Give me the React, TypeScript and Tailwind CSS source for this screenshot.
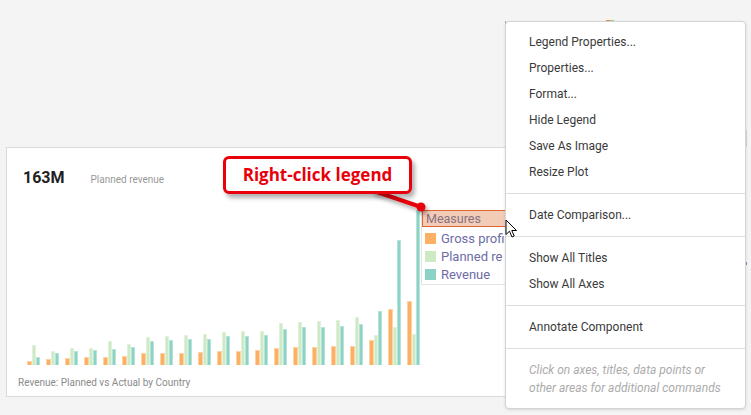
import React from "react";

type Group = [number, number, number];

// bar heights in px: gross profit, planned revenue, revenue
const groups: Group[] = [
  [4, 20, 8],
  [6, 14, 12],
  [7, 17, 14],
  [8, 17, 15],
  [8, 24, 16],
  [9, 21, 18],
  [12, 28, 24],
  [12, 29, 25],
  [12, 30, 26],
  [13, 31, 26],
  [14, 33, 29],
  [14, 34, 29],
  [15, 34, 30],
  [17, 42, 36],
  [18, 43, 38],
  [18, 44, 38],
  [19, 45, 39],
  [19, 48, 41],
  [25, 30, 54],
  [56, 38, 125],
  [64, 31, 155],
];

const menuSections = [
  ["Legend Properties...", "Properties...", "Format...", "Hide Legend", "Save As Image", "Resize Plot"],
  ["Date Comparison..."],
  ["Show All Titles", "Show All Axes"],
  ["Annotate Component"],
];

function Bars() {
  return (
    <div className="flex items-end gap-[6px] h-[155px]">
      {groups.map(([o, g, t], i) => (
        <div key={i} className="flex items-end w-[13px]">
          <div
            className="w-[4.5px] bg-[#fdb064] border border-b-0 border-[#fdd3a8]"
            style={{ height: o }}
          />
          <div
            className="w-[4.5px] bg-[#cdeac5] border border-b-0 border-[#e1f2dc]"
            style={{ height: g }}
          />
          <div
            className="w-[4px] bg-[#8dd3c5] border border-b-0 border-[#b6e3da]"
            style={{ height: t }}
          />
        </div>
      ))}
    </div>
  );
}

function Legend() {
  // the legend runs on under the context menu, so only its left part shows
  const items = [
    { label: "Gross profi", color: "bg-[#fdb064]" },
    { label: "Planned re", color: "bg-[#cdeac5]" },
    { label: "Revenue", color: "bg-[#8dd3c5]" },
  ];
  return (
    <div className="self-start ml-[1px] w-[85px] h-[75px] overflow-hidden border-l border-b border-[#e4e4e4]">
      <div className="h-[17px] w-[100px] bg-[#f3ccb8] border border-[#e0662f] pl-[3px] text-[12.5px] leading-[15px] text-[#86717e]">
        Measures
      </div>
      <div className="flex flex-col gap-[7px] pt-[6px] pl-[3px]">
        {items.map((it) => (
          <div key={it.label} className="flex items-center gap-[5px] h-[11px]">
            <div className={`w-[11px] h-[11px] shrink-0 ${it.color}`} />
            <span className="text-[13px] leading-[11px] text-[#6d6ca6] whitespace-nowrap">
              {it.label}
            </span>
          </div>
        ))}
      </div>
    </div>
  );
}

function ContextMenu() {
  return (
    <div className="absolute left-[505px] top-[21px] w-[241px] h-[388px] bg-white border border-[#d4d4d4] rounded-[4px] shadow-[0_1px_3px_rgba(0,0,0,0.12)] text-[12px] text-[#3a3a3a]">
      <div className="pt-[7px]">
        {menuSections.map((section, si) => (
          <div key={si} className={si > 0 ? "border-t border-[#dedede] pt-[8px]" : ""}>
            {section.map((label) => (
              <div key={label} className="h-[26px] leading-[26px] pl-[23px]">
                {label}
              </div>
            ))}
            <div className="h-[8px]" />
          </div>
        ))}
        <div className="border-t border-[#dedede] pt-[12px] pl-[23px] italic text-[#ababab] leading-[18px]">
          Click on axes, titles, data points or
          <br />
          other areas for additional commands
        </div>
      </div>
    </div>
  );
}

export default function App() {
  return (
    <div className="relative w-[751px] h-[415px] overflow-hidden bg-[#f4f4f4] font-['Roboto',sans-serif]">
      {/* bits of the toolbar peeking out from behind the menu */}
      <div className="absolute left-[505px] top-[21px] w-[1px] h-[71px] bg-[#a99ed6]" />
      <div className="absolute left-[606px] top-[20px] w-[4px] h-[2px] bg-[#f08a3c]" />
      <div className="absolute left-[610px] top-[20px] w-[4px] h-[2px] bg-[#9fd08f]" />
      <div className="absolute left-[746px] top-[130px] w-[1px] h-[17px] bg-[#d8d8d8]" />
      <div className="absolute left-[746px] top-[262px] w-[1px] h-[3px] bg-[#9b7cc7]" />

      {/* chart card */}
      <div className="absolute left-[6px] top-[147px] w-[640px] h-[250px] bg-white border border-[#d9d9d9] flex flex-col">
        <div className="flex items-baseline h-[48px] pt-[22px] pl-[16px]">
          <span className="text-[16px] font-bold text-[#1f1f1f] leading-[16px]">163M</span>
          <span className="ml-[26px] text-[10px] text-[#999]">Planned revenue</span>
        </div>
        <div className="flex mt-[14px] pl-[20px]">
          <Bars />
          <Legend />
        </div>
        <div className="pl-[11px] pt-[10px] text-[10px] text-[#8a8a8a]">
          Revenue: Planned vs Actual by Country
        </div>
      </div>

      {/* callout connector */}
      <svg
        className="absolute left-0 top-0 drop-shadow-[2px_3px_2px_rgba(0,0,0,0.35)]"
        width="751"
        height="415"
      >
        <line x1="374" y1="191" x2="421" y2="207" stroke="#e8000b" strokeWidth="4" strokeLinecap="round" />
        <circle cx="421" cy="207" r="4.5" fill="#e8000b" />
      </svg>

      {/* callout */}
      <div className="absolute left-[223px] top-[156px] w-[189px] h-[38px] bg-white border-[3.5px] border-[#e8000b] rounded-[6px] shadow-[3px_4px_4px_rgba(0,0,0,0.3)] flex items-center justify-center">
        <span className="font-['Open_Sans',sans-serif] font-bold text-[17px] text-[#e8000b]">
          Right-click legend
        </span>
      </div>

      <ContextMenu />

      {/* mouse cursor */}
      <svg className="absolute left-[505px] top-[219px]" width="14" height="20" viewBox="0 0 14 20">
        <path
          d="M1 1 L1 15.5 L4.5 12.2 L7 18 L9.2 17 L6.8 11.5 L11.5 11.5 Z"
          fill="#fff"
          stroke="#000"
          strokeWidth="1"
          strokeLinejoin="round"
        />
      </svg>
    </div>
  );
}
